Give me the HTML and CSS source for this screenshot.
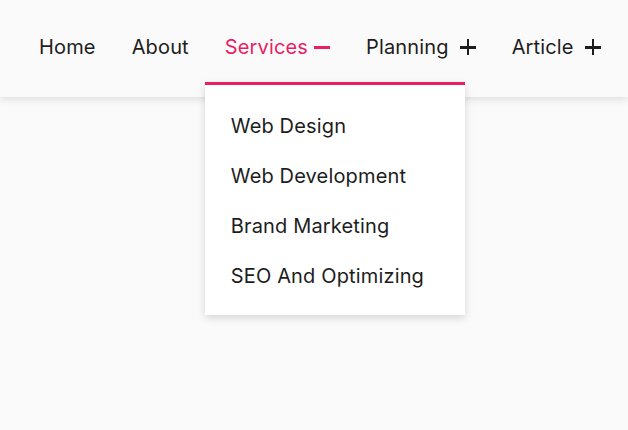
FILE: index.html
```html
<!DOCTYPE html>
<html lang="en">
<head>
    <meta charset="UTF-8">
    <meta name="viewport" content="width=device-width, initial-scale=1.0">
    <title>Menu</title>
    <link rel="stylesheet" href="styles.css">
</head>
<body>
    <header class="header">
        <ul class="nav">
            <li class="nav-item"><a href="#">Home</a></li>
            <li class="nav-item"><a href="#">About</a></li>
            <li class="nav-item active">
                <a href="#">Services <span class="toggle minus"></span></a>
                <ul class="dropdown">
                    <li><a href="#">Web Design</a></li>
                    <li><a href="#">Web Development</a></li>
                    <li><a href="#">Brand Marketing</a></li>
                    <li><a href="#">SEO And Optimizing</a></li>
                </ul>
            </li>
            <li class="nav-item"><a href="#">Planning <span class="toggle plus"></span></a></li>
            <li class="nav-item"><a href="#">Article <span class="toggle plus"></span></a></li>
        </ul>
    </header>
</body>
</html>
```

FILE: styles.css
```css
html, body {
    min-height: 100vh;
}
body {
    font-family: Inter, "Noto Sans", sans-serif;
    margin: 0;
    padding: 0;
    background-color: #fafafa;
    color: #1d1d1d;
}
a {
    color: inherit;
    text-decoration: none;
}
.header {
    position: relative;
    z-index: 10;
    height: 97px;
    background-color: #fafafa;
    box-shadow: 0 2px 8px rgba(0, 0, 0, 0.12);
    padding-left: 21px;
}
.nav {
    list-style: none;
    margin: 0;
    padding: 0;
    display: flex;
    height: 100%;
}
.nav-item {
    position: relative;
    padding: 0 18px 3px;
    display: flex;
    align-items: center;
    font-size: 20px;
    letter-spacing: 0.15px;
}
.nav-item > a {
    display: flex;
    align-items: center;
}
.nav-item.active > a {
    color: #e91e63;
}
.toggle {
    position: relative;
    display: inline-block;
    width: 16px;
    height: 16px;
    margin-left: 6px;
}
.toggle::before, .toggle::after {
    content: "";
    position: absolute;
    background-color: currentColor;
}
.toggle::before {
    left: 0;
    right: 0;
    top: 7px;
    height: 2.5px;
}
.plus {
    margin-left: 11px;
}
.plus::after {
    top: 0;
    bottom: 0;
    left: 7px;
    width: 2.5px;
}
.minus::after {
    display: none;
}
.dropdown {
    position: absolute;
    z-index: 20;
    top: 82px;
    left: -2px;
    width: 260px;
    list-style: none;
    margin: 0;
    padding: 16px 0 14px;
    background-color: #fff;
    border-top: 3px solid #e91e63;
    box-shadow: 0 3px 8px rgba(0, 0, 0, 0.15);
}
.dropdown li a {
    display: block;
    padding: 0 26px;
    line-height: 50px;
    color: #1d1d1d;
}
```
